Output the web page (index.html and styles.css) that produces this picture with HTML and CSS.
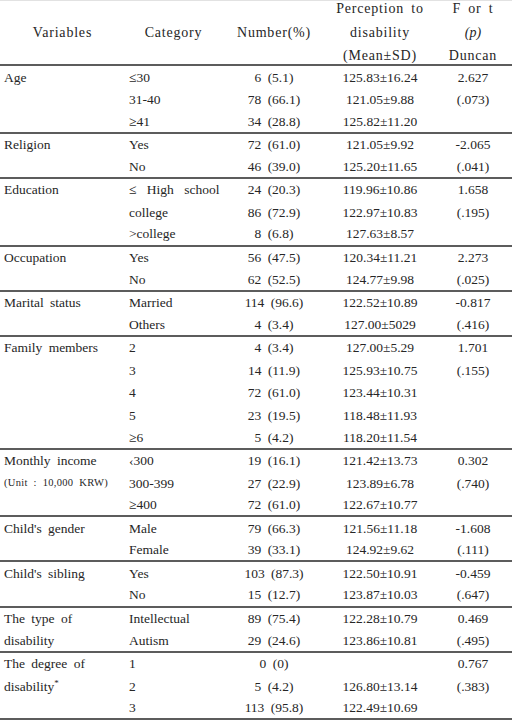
FILE: index.html
```html
<!DOCTYPE html>
<html lang="en">
<head>
<meta charset="UTF-8">
<meta name="viewport" content="width=device-width, initial-scale=1.0">
<title>Perception to disability by characteristics</title>
<link rel="stylesheet" href="styles.css">
</head>
<body>
<div class="stats-table">
  <div class="head">
    <div class="hcell"><span>Variables</span></div>
    <div class="hcell"><span>Category</span></div>
    <div class="hcell"><span>Number(%)</span></div>
    <div class="hcell"><span>Perception to</span><span>disability</span><span>(Mean±SD)</span></div>
    <div class="hcell"><span>F or t</span><span><i>(p)</i></span><span>Duncan</span></div>
  </div>

  <div class="group">
    <div class="row"><span>Age</span><span>≤30</span><span>6 (5.1)</span><span>125.83±16.24</span><span>2.627</span></div>
    <div class="row"><span></span><span>31-40</span><span>78 (66.1)</span><span>121.05±9.88</span><span>(.073)</span></div>
    <div class="row"><span></span><span>≥41</span><span>34 (28.8)</span><span>125.82±11.20</span><span></span></div>
  </div>
  <div class="group">
    <div class="row"><span>Religion</span><span>Yes</span><span>72 (61.0)</span><span>121.05±9.92</span><span>-2.065</span></div>
    <div class="row"><span></span><span>No</span><span>46 (39.0)</span><span>125.20±11.65</span><span>(.041)</span></div>
  </div>
  <div class="group">
    <div class="row"><span>Education</span><span class="wide">≤ High school</span><span>24 (20.3)</span><span>119.96±10.86</span><span>1.658</span></div>
    <div class="row"><span></span><span>college</span><span>86 (72.9)</span><span>122.97±10.83</span><span>(.195)</span></div>
    <div class="row"><span></span><span>&gt;college</span><span>8 (6.8)</span><span>127.63±8.57</span><span></span></div>
  </div>
  <div class="group">
    <div class="row"><span>Occupation</span><span>Yes</span><span>56 (47.5)</span><span>120.34±11.21</span><span>2.273</span></div>
    <div class="row"><span></span><span>No</span><span>62 (52.5)</span><span>124.77±9.98</span><span>(.025)</span></div>
  </div>
  <div class="group">
    <div class="row"><span>Marital status</span><span>Married</span><span>114 (96.6)</span><span>122.52±10.89</span><span>-0.817</span></div>
    <div class="row"><span></span><span>Others</span><span>4 (3.4)</span><span>127.00±5029</span><span>(.416)</span></div>
  </div>
  <div class="group">
    <div class="row"><span>Family members</span><span>2</span><span>4 (3.4)</span><span>127.00±5.29</span><span>1.701</span></div>
    <div class="row"><span></span><span>3</span><span>14 (11.9)</span><span>125.93±10.75</span><span>(.155)</span></div>
    <div class="row"><span></span><span>4</span><span>72 (61.0)</span><span>123.44±10.31</span><span></span></div>
    <div class="row"><span></span><span>5</span><span>23 (19.5)</span><span>118.48±11.93</span><span></span></div>
    <div class="row"><span></span><span>≥6</span><span>5 (4.2)</span><span>118.20±11.54</span><span></span></div>
  </div>
  <div class="group">
    <div class="row"><span>Monthly income</span><span>‹300</span><span>19 (16.1)</span><span>121.42±13.73</span><span>0.302</span></div>
    <div class="row"><span class="unit">(Unit : 10,000 KRW)</span><span>300-399</span><span>27 (22.9)</span><span>123.89±6.78</span><span>(.740)</span></div>
    <div class="row"><span></span><span>≥400</span><span>72 (61.0)</span><span>122.67±10.77</span><span></span></div>
  </div>
  <div class="group">
    <div class="row"><span>Child's gender</span><span>Male</span><span>79 (66.3)</span><span>121.56±11.18</span><span>-1.608</span></div>
    <div class="row"><span></span><span>Female</span><span>39 (33.1)</span><span>124.92±9.62</span><span>(.111)</span></div>
  </div>
  <div class="group">
    <div class="row"><span>Child's sibling</span><span>Yes</span><span>103 (87.3)</span><span>122.50±10.91</span><span>-0.459</span></div>
    <div class="row"><span></span><span>No</span><span>15 (12.7)</span><span>123.87±10.03</span><span>(.647)</span></div>
  </div>
  <div class="group">
    <div class="row"><span>The type of</span><span>Intellectual</span><span>89 (75.4)</span><span>122.28±10.79</span><span>0.469</span></div>
    <div class="row"><span>disability</span><span>Autism</span><span>29 (24.6)</span><span>123.86±10.81</span><span>(.495)</span></div>
  </div>
  <div class="group">
    <div class="row"><span>The degree of</span><span>1</span><span>0 (0)</span><span></span><span>0.767</span></div>
    <div class="row"><span>disability<sup>*</sup></span><span>2</span><span>5 (4.2)</span><span>126.80±13.14</span><span>(.383)</span></div>
    <div class="row"><span></span><span>3</span><span>113 (95.8)</span><span>122.49±10.69</span><span></span></div>
  </div>
</div>
</body>
</html>
```

FILE: styles.css
```css
body {
  margin: 0;
  background-color: #fff;
  color: #262626;
  font-family: "Liberation Serif", "DejaVu Serif", serif;
}
.stats-table {
  width: 512px;
}
.head,
.row {
  display: grid;
  grid-template-columns: 125px 97px 104px 108px 78px;
}
.head {
  box-sizing: border-box;
  height: 66px;
  grid-template-rows: minmax(0, 1fr);
  border-top: 1px solid #e2e2e2;
  border-bottom: 2px solid #5c5c5c;
  font-size: 14px;
  letter-spacing: 0.8px;
  word-spacing: 3px;
}
.hcell {
  display: flex;
  flex-direction: column;
  justify-content: center;
  align-items: center;
}
.hcell span {
  line-height: 23.5px;
  white-space: nowrap;
}
.hcell i {
  letter-spacing: 0;
}
.row {
  box-sizing: border-box;
  height: 22.57px;
  align-items: center;
  font-size: 13.5px;
  word-spacing: 3px;
}
.group .row:last-child {
  border-bottom: 2px solid #5c5c5c;
}
.row span {
  line-height: 1;
  white-space: nowrap;
  text-align: center;
}
.row span:nth-child(1),
.row span:nth-child(2) {
  text-align: left;
  padding-left: 4px;
}
.wide {
  word-spacing: 7px;
}
.unit {
  font-size: 10.5px;
  letter-spacing: 0.3px;
}
sup {
  font-size: 9px;
  line-height: 0;
  vertical-align: 5px;
}
```
